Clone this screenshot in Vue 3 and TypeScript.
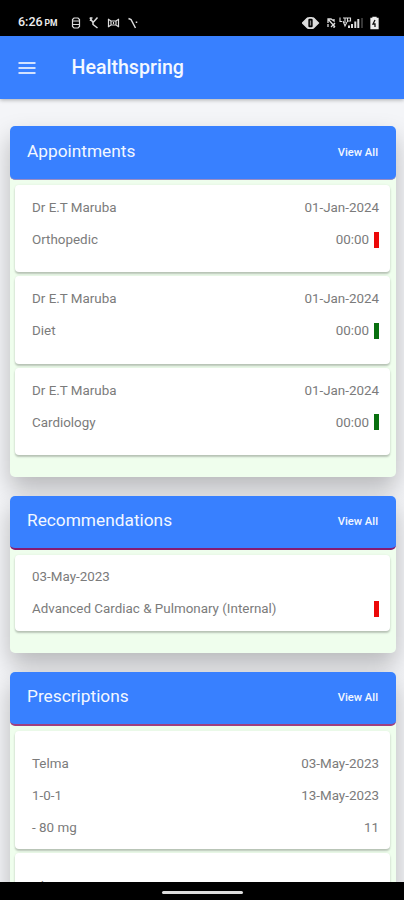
<script setup lang="ts">
interface Row { left: string; right?: string; flag?: 'red' | 'green' }
interface Entry { rows: Row[] }
interface Section { title: string; kind: string; entries: Entry[] }

const visit = (dept: string, flag: 'red' | 'green'): Entry => ({
  rows: [
    { left: 'Dr E.T Maruba', right: '01-Jan-2024' },
    { left: dept, right: '00:00', flag },
  ],
})

const sections: Section[] = [
  {
    title: 'Appointments',
    kind: 'appointments',
    entries: [visit('Orthopedic', 'red'), visit('Diet', 'green'), visit('Cardiology', 'green')],
  },
  {
    title: 'Recommendations',
    kind: 'recommendations',
    entries: [
      { rows: [{ left: '03-May-2023' }, { left: 'Advanced Cardiac & Pulmonary (Internal)', flag: 'red' }] },
    ],
  },
  {
    title: 'Prescriptions',
    kind: 'prescriptions',
    entries: [
      {
        rows: [
          { left: 'Telma', right: '03-May-2023' },
          { left: '1-0-1', right: '13-May-2023' },
          { left: '- 80 mg', right: '11' },
        ],
      },
      { rows: [{ left: 'Al' }] },
    ],
  },
]
</script>

<template>
  <div class="screen">
    <div class="status">
      <span class="clock">6:26<small>PM</small></span>
      <svg class="left-icons" width="70" height="14" viewBox="0 0 70 14" fill="none" stroke="#ddd" stroke-width="1.2">
        <path d="M4 2h4l1.500 1.500v7L8 12H4l-1.500-1.500v-7zM3 5h6M3 8.500h6" />
        <path d="M20 2l3 4.500M27.500 1.500L23 6.500v2l4.500 3.500M20.500 5V2h2" stroke-width="1.500" />
        <path d="M38.500 3v8M48.500 3v8M38 3l3 2h5l3-2M38 11l3-2h5l3 2M41 5v4M46 5v4M43.500 6v2" />
        <path d="M58.500 2.500l2.500 1 4.500 8.500M66.500 5.500v1.500" stroke-width="1.500" />
      </svg>
      <svg class="right-icons" width="80" height="14" viewBox="0 0 80 14" fill="none" stroke="#ddd" stroke-width="1.300">
        <path d="M5 2.500L0.500 7 5 11.500zM12 2.500L16.500 7 12 11.500z" fill="#ddd" />
        <rect x="5.500" y="1.800" width="6" height="10.400" rx="2" stroke-width="1.700" />
        <path d="M8.500 4.500v5" stroke="#888" />
        <path d="M26 3l7 8M26 7V3h3l3 2v-2M26 11V8M29 11l4-4M32 8v4" />
        <path d="M38 1.500v4h2M41 2h4M43 2v5M45.500 6V2h3v3h-3M41 5l2 5 2-4" stroke-width="1.100" />
        <path d="M47 12v-2.500M50 12V8M53.300 12V5.500M56.300 12V3" stroke-width="2" />
        <path d="M60 12V2" stroke="#555" />
        <path d="M69 2.500h2v-1h3v1h2V12.500h-7z" fill="#eee" stroke="#eee" />
        <path d="M73 4l-2 4h2v3" stroke="#111" />
      </svg>
    </div>
    <header class="bar">
      <svg width="18" height="12" viewBox="0 0 18 12"><path d="M0.500 1h17M0.500 6h17M0.500 11h17" stroke="#d3e2ff" stroke-width="2" /></svg>
      <h1>Healthspring</h1>
    </header>
    <main>
      <section v-for="s in sections" :key="s.title" class="card" :class="s.kind">
        <div class="head"><h2>{{ s.title }}</h2><a>View All</a></div>
        <div class="list">
          <article v-for="(e, i) in s.entries" :key="i">
            <div v-for="(r, j) in e.rows" :key="j" class="row">
              <span>{{ r.left }}</span>
              <span class="end">{{ r.right }}<i v-if="r.flag" :class="r.flag"></i></span>
            </div>
          </article>
        </div>
      </section>
    </main>
    <footer><span></span></footer>
  </div>
</template>

<style>
body { margin: 0; overflow: hidden; }
</style>

<style scoped>
.screen { width: 404px; height: 900px; display: flex; flex-direction: column; overflow: hidden; background: #f4f5f8; font-family: Roboto, "Liberation Sans", sans-serif; }
.status { height: 36px; flex: none; box-sizing: border-box; background: #000; color: #eee; display: flex; align-items: center; padding: 9px 22px 0 18px; }
.clock { width: 52px; font-size: 12.500px; font-weight: 500; line-height: 14px; white-space: nowrap; }
.clock small { font-size: 8.500px; margin-left: 2px; font-weight: 700; }
.right-icons { margin-left: auto; }
.bar { height: 63px; flex: none; background: #3880ff; display: flex; align-items: center; padding-left: 18px; gap: 35.500px; box-shadow: 0 1px 4px rgba(0, 0, 0, .3); position: relative; }
h1 { margin: 0; font-size: 19.600px; font-weight: 500; color: #f4f8ff; }
main { flex: 1; min-height: 0; overflow: hidden; padding: 27px 8.500px 0 9.500px; display: flex; flex-direction: column; gap: 19px; }
.card { flex: none; border-radius: 5px; background: #effeed; box-shadow: 0 12px 24px rgba(0, 0, 0, .25); position: relative; }
.head { height: 54px; box-sizing: border-box; padding: 0 17.500px; border-radius: 5px; background: #3880ff; color: #f2f7ff; display: flex; align-items: center; justify-content: space-between; border-bottom: 1px solid #9a8cc4; }
.recommendations .head { border-bottom: 2px solid #861c72; }
.prescriptions .head { border-bottom: 2px solid #a04080; }
h2 { margin: 0 0 3px; font-size: 17.300px; font-weight: 400; }
.head a { font-size: 11.200px; font-weight: 500; }
.list { padding: 5px 5.500px 21.800px; display: flex; flex-direction: column; gap: 4px; }
article { background: #fff; border-radius: 4px; padding: 6.500px 11px 16.900px 17px; box-shadow: 0 2px 2px rgba(0, 0, 0, .22), 0 0 3px rgba(0, 0, 0, .06); }
.recommendations article { padding-top: 6px; padding-bottom: 6px; }
.prescriptions article { padding-top: 17px; padding-bottom: 5.500px; }
.row { height: 32px; display: flex; align-items: center; justify-content: space-between; font-size: 13.400px; color: #7b7b7b; white-space: nowrap; }
.end { display: flex; align-items: center; }
i { width: 5px; height: 16px; margin-left: 5px; }
.red { background: #ec0808; }
.green { background: #08700f; }
footer { height: 18px; flex: none; background: #000; display: flex; align-items: center; justify-content: center; position: relative; }
footer span { width: 81px; height: 3px; background: #ddd; border-radius: 2px; margin-top: 2px; }
</style>
